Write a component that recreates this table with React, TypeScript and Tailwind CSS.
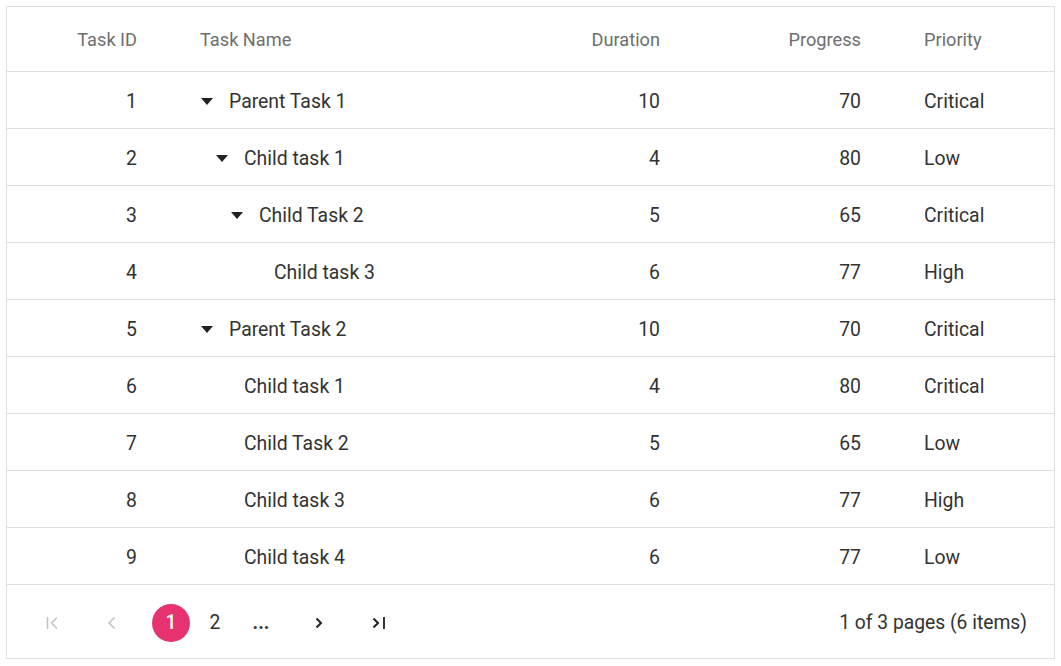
import React from 'react';

type Row = {
  id: number;
  name: string;
  level: number;
  expandable: boolean;
  duration: number;
  progress: number;
  priority: string;
};

const rows: Row[] = [
  { id: 1, name: 'Parent Task 1', level: 0, expandable: true, duration: 10, progress: 70, priority: 'Critical' },
  { id: 2, name: 'Child task 1', level: 1, expandable: true, duration: 4, progress: 80, priority: 'Low' },
  { id: 3, name: 'Child Task 2', level: 2, expandable: true, duration: 5, progress: 65, priority: 'Critical' },
  { id: 4, name: 'Child task 3', level: 3, expandable: false, duration: 6, progress: 77, priority: 'High' },
  { id: 5, name: 'Parent Task 2', level: 0, expandable: true, duration: 10, progress: 70, priority: 'Critical' },
  { id: 6, name: 'Child task 1', level: 1, expandable: false, duration: 4, progress: 80, priority: 'Critical' },
  { id: 7, name: 'Child Task 2', level: 1, expandable: false, duration: 5, progress: 65, priority: 'Low' },
  { id: 8, name: 'Child task 3', level: 1, expandable: false, duration: 6, progress: 77, priority: 'High' },
  { id: 9, name: 'Child task 4', level: 1, expandable: false, duration: 6, progress: 77, priority: 'Low' },
];

const cols = 'grid grid-cols-[151px_302px_221px_201px_1fr]';

function Caret() {
  return (
    <svg width="14" height="14" viewBox="0 0 14 14" className="shrink-0">
      <path d="M1 4h12l-6 7z" fill="#212121" />
    </svg>
  );
}

function FirstIcon({ color }: { color: string }) {
  return (
    <svg width="18" height="18" viewBox="0 0 18 18">
      <path d="M3.5 3v12" stroke={color} strokeWidth="1.6" fill="none" />
      <path d="M13 3.5 7.5 9l5.5 5.5" stroke={color} strokeWidth="1.6" fill="none" />
    </svg>
  );
}

function PrevIcon({ color }: { color: string }) {
  return (
    <svg width="18" height="18" viewBox="0 0 18 18">
      <path d="M11.5 3.5 6 9l5.5 5.5" stroke={color} strokeWidth="1.6" fill="none" />
    </svg>
  );
}

function NextIcon({ color }: { color: string }) {
  return (
    <svg width="18" height="18" viewBox="0 0 18 18">
      <path d="M6.5 4.5 11 9l-4.5 4.5" stroke={color} strokeWidth="2" fill="none" />
    </svg>
  );
}

function LastIcon({ color }: { color: string }) {
  return (
    <svg width="18" height="18" viewBox="0 0 18 18">
      <path d="M3.5 4.5 8 9l-4.5 4.5" stroke={color} strokeWidth="2" fill="none" />
      <path d="M14 3v12" stroke={color} strokeWidth="1.8" fill="none" />
    </svg>
  );
}

export default function App() {
  return (
    <div className="min-h-screen bg-white pl-[6px] pt-[6px] font-['Roboto',sans-serif]">
      <div className="w-[1049px] border border-[#e0e0e0]">
        {/* Header */}
        <div className={`${cols} h-[65px] items-center border-b border-[#e0e0e0] pt-[1px] text-[18.2px] text-[#6e6e6e]`}>
          <div className="pr-[21px] text-right">Task ID</div>
          <div className="pl-[42px]">Task Name</div>
          <div className="pr-[21px] text-right">Duration</div>
          <div className="pr-[21px] text-right">Progress</div>
          <div className="pl-[42px]">Priority</div>
        </div>

        {/* Rows */}
        {rows.map((r) => (
          <div
            key={r.id}
            className={`${cols} h-[57px] items-center border-b border-[#e0e0e0] pt-[3px] text-[19.4px] text-[#333333]`}
          >
            <div className="pr-[21px] text-right">{r.id}</div>
            <div className="flex items-center pl-[42px]">
              <span className="shrink-0" style={{ width: r.level * 15 }} />
              {r.expandable ? (
                <span className="flex w-[29px] shrink-0 items-center">
                  <Caret />
                </span>
              ) : (
                <span className="w-[29px] shrink-0" />
              )}
              <span>{r.name}</span>
            </div>
            <div className="pr-[21px] text-right">{r.duration}</div>
            <div className="pr-[21px] text-right">{r.progress}</div>
            <div className="pl-[42px]">{r.priority}</div>
          </div>
        ))}

        {/* Pager */}
        <div className="flex h-[73px] items-center justify-between pl-[30px] pr-[27px] pt-[3px] text-[19.3px] text-[#333333]">
          <div className="flex items-center">
            <span className="flex w-[32px] justify-center">
              <FirstIcon color="#c4c4c4" />
            </span>
            <span className="ml-[27px] flex w-[32px] justify-center">
              <PrevIcon color="#c4c4c4" />
            </span>
            <span className="ml-[24px] flex h-[38px] w-[38px] items-center justify-center rounded-full bg-[#e6336f] font-medium text-white">
              1
            </span>
            <span className="ml-[9px] flex w-[32px] justify-center">2</span>
            <span className="ml-[14px] flex w-[32px] justify-center font-bold leading-none">...</span>
            <span className="ml-[26px] flex w-[32px] justify-center">
              <NextIcon color="#212121" />
            </span>
            <span className="ml-[28px] flex w-[32px] justify-center">
              <LastIcon color="#212121" />
            </span>
          </div>
          <div>1 of 3 pages (6 items)</div>
        </div>
      </div>
    </div>
  );
}
